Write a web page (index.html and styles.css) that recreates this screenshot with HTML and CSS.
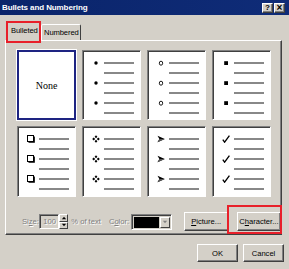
FILE: index.html
```html
<!DOCTYPE html>
<html>
<head>
<meta charset="utf-8">
<link rel="stylesheet" href="styles.css">
</head>
<body>
<div class="window">
  <div class="titlebar">
    <span class="title">Bullets and Numbering</span>
    <div class="tbtns">
      <span class="tbtn">?</span>
      <span class="tbtn close">×</span>
    </div>
  </div>

  <div class="tabs">
    <div class="tab active">Bulleted</div>
    <div class="tab">Numbered</div>
  </div>

  <div class="panel">
    <div class="grid">
      <div class="cell sel"><span class="none">None</span></div>

      <div class="cell">
        <div class="ln"><span class="b"><svg viewBox="0 0 8 8"><circle cx="4" cy="4" r="1.7"/></svg></span><i></i></div>
        <div class="ln"><span class="b"></span><i></i></div>
        <div class="ln"><span class="b"><svg viewBox="0 0 8 8"><circle cx="4" cy="4" r="1.7"/></svg></span><i></i></div>
        <div class="ln"><span class="b"></span><i></i></div>
        <div class="ln"><span class="b"><svg viewBox="0 0 8 8"><circle cx="4" cy="4" r="1.7"/></svg></span><i></i></div>
        <div class="ln"><span class="b"></span><i></i></div>
      </div>

      <div class="cell">
        <div class="ln"><span class="b"><svg viewBox="0 0 8 8"><ellipse cx="4" cy="4.2" rx="1.7" ry="2" fill="none" stroke="#000" stroke-width="0.9"/></svg></span><i></i></div>
        <div class="ln"><span class="b"></span><i></i></div>
        <div class="ln"><span class="b"><svg viewBox="0 0 8 8"><ellipse cx="4" cy="4.2" rx="1.7" ry="2" fill="none" stroke="#000" stroke-width="0.9"/></svg></span><i></i></div>
        <div class="ln"><span class="b"></span><i></i></div>
        <div class="ln"><span class="b"><svg viewBox="0 0 8 8"><ellipse cx="4" cy="4.2" rx="1.7" ry="2" fill="none" stroke="#000" stroke-width="0.9"/></svg></span><i></i></div>
        <div class="ln"><span class="b"></span><i></i></div>
      </div>

      <div class="cell">
        <div class="ln"><span class="b"><svg viewBox="0 0 8 8"><rect x="2.2" y="2.2" width="3.8" height="3.8"/></svg></span><i></i></div>
        <div class="ln"><span class="b"></span><i></i></div>
        <div class="ln"><span class="b"><svg viewBox="0 0 8 8"><rect x="2.2" y="2.2" width="3.8" height="3.8"/></svg></span><i></i></div>
        <div class="ln"><span class="b"></span><i></i></div>
        <div class="ln"><span class="b"><svg viewBox="0 0 8 8"><rect x="2.2" y="2.2" width="3.8" height="3.8"/></svg></span><i></i></div>
        <div class="ln"><span class="b"></span><i></i></div>
      </div>

      <div class="cell">
        <div class="ln"><span class="b"><svg viewBox="0 0 8 8"><rect x="0.5" y="0.5" width="6" height="6" fill="none" stroke="#000"/><path d="M7.2 1.5V7.2H1.5" fill="none" stroke="#000" stroke-width="1.3"/></svg></span><i></i></div>
        <div class="ln"><span class="b"></span><i></i></div>
        <div class="ln"><span class="b"><svg viewBox="0 0 8 8"><rect x="0.5" y="0.5" width="6" height="6" fill="none" stroke="#000"/><path d="M7.2 1.5V7.2H1.5" fill="none" stroke="#000" stroke-width="1.3"/></svg></span><i></i></div>
        <div class="ln"><span class="b"></span><i></i></div>
        <div class="ln"><span class="b"><svg viewBox="0 0 8 8"><rect x="0.5" y="0.5" width="6" height="6" fill="none" stroke="#000"/><path d="M7.2 1.5V7.2H1.5" fill="none" stroke="#000" stroke-width="1.3"/></svg></span><i></i></div>
        <div class="ln"><span class="b"></span><i></i></div>
      </div>

      <div class="cell">
        <div class="ln"><span class="b"><svg viewBox="0 0 8 8"><path d="M4 0.2L5.4 1.7 4 3.2 2.6 1.7Z M4 4.8L5.4 6.3 4 7.8 2.6 6.3Z M1.7 2.6L3.2 4 1.7 5.4 0.2 4Z M6.3 2.6L7.8 4 6.3 5.4 4.8 4Z"/></svg></span><i></i></div>
        <div class="ln"><span class="b"></span><i></i></div>
        <div class="ln"><span class="b"><svg viewBox="0 0 8 8"><path d="M4 0.2L5.4 1.7 4 3.2 2.6 1.7Z M4 4.8L5.4 6.3 4 7.8 2.6 6.3Z M1.7 2.6L3.2 4 1.7 5.4 0.2 4Z M6.3 2.6L7.8 4 6.3 5.4 4.8 4Z"/></svg></span><i></i></div>
        <div class="ln"><span class="b"></span><i></i></div>
        <div class="ln"><span class="b"><svg viewBox="0 0 8 8"><path d="M4 0.2L5.4 1.7 4 3.2 2.6 1.7Z M4 4.8L5.4 6.3 4 7.8 2.6 6.3Z M1.7 2.6L3.2 4 1.7 5.4 0.2 4Z M6.3 2.6L7.8 4 6.3 5.4 4.8 4Z"/></svg></span><i></i></div>
        <div class="ln"><span class="b"></span><i></i></div>
      </div>

      <div class="cell">
        <div class="ln"><span class="b"><svg viewBox="0 0 8 8"><path d="M0.5 0.8L7.8 4 0.5 7.2 2.4 4Z"/><path d="M2.4 4L7.8 4 0.5 7.2Z" fill="#555"/></svg></span><i></i></div>
        <div class="ln"><span class="b"></span><i></i></div>
        <div class="ln"><span class="b"><svg viewBox="0 0 8 8"><path d="M0.5 0.8L7.8 4 0.5 7.2 2.4 4Z"/><path d="M2.4 4L7.8 4 0.5 7.2Z" fill="#555"/></svg></span><i></i></div>
        <div class="ln"><span class="b"></span><i></i></div>
        <div class="ln"><span class="b"><svg viewBox="0 0 8 8"><path d="M0.5 0.8L7.8 4 0.5 7.2 2.4 4Z"/><path d="M2.4 4L7.8 4 0.5 7.2Z" fill="#555"/></svg></span><i></i></div>
        <div class="ln"><span class="b"></span><i></i></div>
      </div>

      <div class="cell">
        <div class="ln"><span class="b"><svg viewBox="0 0 8 8"><path d="M0.8 4.6L2.6 7.2 7.4 0.6" fill="none" stroke="#000" stroke-width="1.3"/></svg></span><i></i></div>
        <div class="ln"><span class="b"></span><i></i></div>
        <div class="ln"><span class="b"><svg viewBox="0 0 8 8"><path d="M0.8 4.6L2.6 7.2 7.4 0.6" fill="none" stroke="#000" stroke-width="1.3"/></svg></span><i></i></div>
        <div class="ln"><span class="b"></span><i></i></div>
        <div class="ln"><span class="b"><svg viewBox="0 0 8 8"><path d="M0.8 4.6L2.6 7.2 7.4 0.6" fill="none" stroke="#000" stroke-width="1.3"/></svg></span><i></i></div>
        <div class="ln"><span class="b"></span><i></i></div>
      </div>
    </div>

    <div class="controls">
      <span class="dis lbl-size">Si<u>z</u>e:</span>
      <span class="numbox dis">100</span>
      <span class="spin">
        <span class="half"><svg viewBox="0 0 7 4"><path d="M3.5 0.5L6 3.5H1Z"/></svg></span>
        <span class="half"><svg viewBox="0 0 7 4"><path d="M1 0.5H6L3.5 3.5Z"/></svg></span>
      </span>
      <span class="dis lbl-pct">% of text</span>
      <span class="dis lbl-color">C<u>o</u>lor:</span>
      <span class="colorbox">
        <span class="swatch"></span>
        <span class="drop"><svg viewBox="0 0 7 4"><path d="M1 0.5H6L3.5 3.5Z" fill="#808080"/></svg></span>
      </span>
      <button class="btn btn-pic"><u>P</u>icture...</button>
      <button class="btn btn-char">C<u>h</u>aracter...</button>
    </div>
  </div>

  <div class="actions">
    <button class="btn btn-act">OK</button>
    <button class="btn btn-act">Cancel</button>
  </div>

  <div class="mark mark-tab"></div>
  <div class="mark mark-char"></div>
</div>
</body>
</html>
```

FILE: styles.css
```css
* { box-sizing: border-box; }

html, body {
  margin: 0;
  padding: 0;
}

body {
  width: 289px;
  height: 269px;
  overflow: hidden;
  background: #d4d0c8;
  font-family: "Liberation Sans", Arial, sans-serif;
  font-size: 7.6px;
  color: #000;
}

.window {
  position: relative;
  width: 289px;
  height: 269px;
  background: #d4d0c8;
}

.titlebar {
  height: 15px;
  background: linear-gradient(to right, #0a246a, #0f2c78);
  display: flex;
  align-items: center;
  justify-content: space-between;
  padding: 0 4px 0 2px;
}

.title {
  color: #fff;
  font-weight: bold;
  font-size: 8px;
  letter-spacing: -0.1px;
}

.tbtns {
  display: flex;
  gap: 1px;
}

.tbtn {
  width: 11px;
  height: 10px;
  background: #d4d0c8;
  border: 1px solid;
  border-color: #fff #404040 #404040 #fff;
  box-shadow: inset -1px -1px 0 #808080;
  font-size: 8px;
  font-weight: bold;
  line-height: 8px;
  text-align: center;
  color: #000;
}

.tbtn.close {
  font-size: 10px;
  line-height: 7px;
}

.tabs {
  position: relative;
  z-index: 1;
  display: flex;
  align-items: flex-end;
  height: 19px;
  margin-top: 6px;
  padding-left: 7px;
}

.tab {
  height: 16px;
  border: 1px solid;
  border-bottom: 0;
  border-color: #fff #404040 transparent #fff;
  border-radius: 2px 2px 0 0;
  line-height: 15px;
  background: #d4d0c8;
  white-space: nowrap;
  letter-spacing: -0.1px;
}

.tab.active {
  height: 20px;
  margin-bottom: -1px;
  padding: 0 0 0 3px;
  line-height: 17px;
  width: 34px;
}

.tab:not(.active) {
  width: 40px;
  padding-left: 2px;
}

.panel {
  height: 195px;
  margin: 0 7px 0 5px;
  border: 1px solid;
  border-color: #fff #404040 #404040 #fff;
  box-shadow: inset -1px -1px 0 #808080;
  padding: 9px 0 0 11px;
}

.grid {
  display: grid;
  grid-template-columns: repeat(4, 59px);
  grid-template-rows: 70px 71px;
  column-gap: 6px;
  row-gap: 6px;
}

.cell {
  background: #fff;
  border: 1px solid;
  border-color: #808080 #fff #fff #808080;
  box-shadow: inset 1px 1px 0 #404040;
  padding-top: 7px;
}

.cell.sel {
  border: 2px solid #1e2482;
  outline: 1px solid #fff;
  display: flex;
  align-items: center;
  justify-content: center;
  padding: 0;
  box-shadow: none;
}

.none {
  font-family: "Liberation Serif", "Times New Roman", serif;
  font-size: 10px;
}

.ln {
  display: flex;
  align-items: center;
  height: 10px;
  padding-left: 9px;
}

.b {
  width: 8px;
  height: 8px;
  display: flex;
}

.b svg {
  width: 8px;
  height: 8px;
  display: block;
}

.ln i {
  display: block;
  width: 30px;
  height: 2px;
  margin-left: 4px;
  background: #888;
}

.controls {
  display: flex;
  align-items: center;
  height: 19px;
  margin-top: 15px;
  white-space: nowrap;
}

.dis {
  color: #808080;
  text-shadow: 1px 1px 0 #fff;
}

.lbl-size {
  margin-left: 5px;
  width: 18px;
}

.numbox {
  width: 20px;
  height: 15px;
  border: 1px solid;
  border-color: #808080 #fff #fff #808080;
  box-shadow: inset 1px 1px 0 #404040;
  background: #d4d0c8;
  line-height: 13px;
  padding-left: 3px;
}

.spin {
  width: 10px;
  height: 15px;
  display: flex;
  flex-direction: column;
}

.half {
  flex: 1;
  background: #d4d0c8;
  border: 1px solid;
  border-color: #fff #404040 #404040 #fff;
  display: flex;
  align-items: center;
  justify-content: center;
}

.half svg {
  width: 6px;
  height: 4px;
  display: block;
}

.lbl-pct {
  margin-left: 3px;
  width: 36px;
}

.lbl-color {
  margin-left: 3px;
  width: 23px;
}

.colorbox {
  width: 42px;
  height: 16px;
  border: 1px solid;
  border-color: #808080 #fff #fff #808080;
  box-shadow: inset 1px 1px 0 #404040;
  background: #d4d0c8;
  display: flex;
  padding: 2px 1px 1px 2px;
  gap: 1px;
}

.swatch {
  flex: 1;
  background: #000;
}

.drop {
  width: 10px;
  border: 1px solid;
  border-color: #fff #404040 #404040 #fff;
  background: #d4d0c8;
  display: flex;
  align-items: center;
  justify-content: center;
}

.drop svg {
  width: 6px;
  height: 4px;
  display: block;
}

.btn {
  font-family: "Liberation Sans", Arial, sans-serif;
  font-size: 7.6px;
  color: #000;
  background: #d4d0c8;
  border: 1px solid;
  border-color: #fff #404040 #404040 #fff;
  box-shadow: inset -1px -1px 0 #808080;
  padding: 0;
  margin: 0;
  height: 19px;
  white-space: nowrap;
}

.btn-pic {
  width: 47px;
  margin-left: 12px;
}

.btn-char {
  width: 46px;
  margin-left: 8px;
}

.actions {
  display: flex;
  justify-content: flex-end;
  gap: 5px;
  margin-top: 9px;
  padding-right: 5px;
}

.btn-act {
  width: 41px;
  height: 18px;
}

.mark {
  position: absolute;
  border: 2px solid #e8202a;
  z-index: 5;
}

.mark-tab {
  left: 6px;
  top: 21px;
  width: 35px;
  height: 22px;
}

.mark-char {
  left: 227px;
  top: 205px;
  width: 55px;
  height: 29px;
}
```
